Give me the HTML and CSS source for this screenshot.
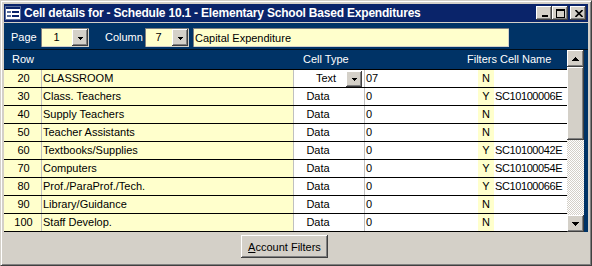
FILE: index.html
```html
<!DOCTYPE html>
<html lang="en">
<head>
<meta charset="UTF-8">
<meta name="viewport" content="width=device-width, initial-scale=1.0">
<title>Cell details</title>
<link rel="stylesheet" href="styles.css">
</head>
<body>
<div class="window">
    <div class="titlebar">
        <svg class="app-icon" width="16" height="14" viewBox="0 0 16 14" shape-rendering="crispEdges">
            <rect x="0" y="0" width="16" height="14" fill="#ffffff"/>
            <rect x="0.5" y="0.5" width="15" height="13" fill="none" stroke="#5a6e9c"/>
            <rect x="1" y="1" width="14" height="2" fill="#0a246a"/>
            <rect x="2" y="5" width="4" height="2" fill="#5a6e9c"/>
            <rect x="7" y="5" width="7" height="2" fill="#0a246a"/>
            <rect x="2" y="9" width="4" height="2" fill="#5a6e9c"/>
            <rect x="7" y="9" width="7" height="2" fill="#0a246a"/>
        </svg>
        <span class="title">Cell details for - Schedule 10.1 - Elementary School Based Expenditures</span>
        <div class="caption-buttons">
            <span class="cap-btn">
                <svg width="8" height="7" viewBox="0 0 8 7" shape-rendering="crispEdges"><rect x="1" y="5" width="6" height="2" fill="#000"/></svg>
            </span>
            <span class="cap-btn">
                <svg width="9" height="9" viewBox="0 0 9 9" shape-rendering="crispEdges"><rect x="0" y="0" width="9" height="2" fill="#000"/><rect x="0" y="0" width="1" height="9" fill="#000"/><rect x="8" y="0" width="1" height="9" fill="#000"/><rect x="0" y="8" width="9" height="1" fill="#000"/></svg>
            </span>
            <span class="cap-btn close-btn">
                <svg width="8" height="7" viewBox="0 0 8 7"><path d="M0.5 0 L7.5 7 M7.5 0 L0.5 7" stroke="#000" stroke-width="1.6"/></svg>
            </span>
        </div>
    </div>

    <div class="client">
        <div class="toolbar">
            <span class="label page-label">Page</span>
            <div class="combo page-combo">
                <span class="combo-value">1</span>
                <span class="drop-btn"><svg width="5" height="3" viewBox="0 0 5 3" shape-rendering="crispEdges"><rect x="0" y="0" width="5" height="1"/><rect x="1" y="1" width="3" height="1"/><rect x="2" y="2" width="1" height="1"/></svg></span>
            </div>
            <span class="label column-label">Column</span>
            <div class="combo column-combo">
                <span class="combo-value">7</span>
                <span class="drop-btn"><svg width="5" height="3" viewBox="0 0 5 3" shape-rendering="crispEdges"><rect x="0" y="0" width="5" height="1"/><rect x="1" y="1" width="3" height="1"/><rect x="2" y="2" width="1" height="1"/></svg></span>
            </div>
            <div class="textbox">Capital Expenditure</div>
        </div>

        <div class="grid-area">
            <div class="grid">
                <div class="grid-head">
                    <span class="h-row">Row</span>
                    <span class="h-desc"></span>
                    <span class="h-type">Cell Type</span>
                    <span class="h-value"></span>
                    <span class="h-rest">Filters Cell Name</span>
                </div>
                <div class="row">
                    <span class="c-num">20</span>
                    <span class="c-desc">CLASSROOM</span>
                    <span class="c-type has-drop">Text<span class="drop-btn"><svg width="5" height="3" viewBox="0 0 5 3" shape-rendering="crispEdges"><rect x="0" y="0" width="5" height="1"/><rect x="1" y="1" width="3" height="1"/><rect x="2" y="2" width="1" height="1"/></svg></span></span>
                    <span class="c-value">07</span>
                    <span class="c-filter">N</span>
                    <span class="c-name"></span>
                </div>
                <div class="row">
                    <span class="c-num">30</span>
                    <span class="c-desc">Class. Teachers</span>
                    <span class="c-type">Data</span>
                    <span class="c-value">0</span>
                    <span class="c-filter">Y</span>
                    <span class="c-name">SC10100006E</span>
                </div>
                <div class="row">
                    <span class="c-num">40</span>
                    <span class="c-desc">Supply Teachers</span>
                    <span class="c-type">Data</span>
                    <span class="c-value">0</span>
                    <span class="c-filter">N</span>
                    <span class="c-name"></span>
                </div>
                <div class="row">
                    <span class="c-num">50</span>
                    <span class="c-desc">Teacher Assistants</span>
                    <span class="c-type">Data</span>
                    <span class="c-value">0</span>
                    <span class="c-filter">N</span>
                    <span class="c-name"></span>
                </div>
                <div class="row">
                    <span class="c-num">60</span>
                    <span class="c-desc">Textbooks/Supplies</span>
                    <span class="c-type">Data</span>
                    <span class="c-value">0</span>
                    <span class="c-filter">Y</span>
                    <span class="c-name">SC10100042E</span>
                </div>
                <div class="row">
                    <span class="c-num">70</span>
                    <span class="c-desc">Computers</span>
                    <span class="c-type">Data</span>
                    <span class="c-value">0</span>
                    <span class="c-filter">Y</span>
                    <span class="c-name">SC10100054E</span>
                </div>
                <div class="row">
                    <span class="c-num">80</span>
                    <span class="c-desc">Prof./ParaProf./Tech.</span>
                    <span class="c-type">Data</span>
                    <span class="c-value">0</span>
                    <span class="c-filter">Y</span>
                    <span class="c-name">SC10100066E</span>
                </div>
                <div class="row">
                    <span class="c-num">90</span>
                    <span class="c-desc">Library/Guidance</span>
                    <span class="c-type">Data</span>
                    <span class="c-value">0</span>
                    <span class="c-filter">N</span>
                    <span class="c-name"></span>
                </div>
                <div class="row">
                    <span class="c-num">100</span>
                    <span class="c-desc">Staff Develop.</span>
                    <span class="c-type">Data</span>
                    <span class="c-value">0</span>
                    <span class="c-filter">N</span>
                    <span class="c-name"></span>
                </div>
            </div>

            <div class="scrollbar">
                <span class="sb-btn"><svg width="7" height="4" viewBox="0 0 7 4" shape-rendering="crispEdges"><rect x="3" y="0" width="1" height="1"/><rect x="2" y="1" width="3" height="1"/><rect x="1" y="2" width="5" height="1"/><rect x="0" y="3" width="7" height="1"/></svg></span>
                <div class="sb-track">
                    <span class="sb-thumb"></span>
                </div>
                <span class="sb-btn"><svg width="7" height="4" viewBox="0 0 7 4" shape-rendering="crispEdges"><rect x="0" y="0" width="7" height="1"/><rect x="1" y="1" width="5" height="1"/><rect x="2" y="2" width="3" height="1"/><rect x="3" y="3" width="1" height="1"/></svg></span>
            </div>
        </div>

        <div class="footer">
            <button class="filters-btn"><u>A</u>ccount Filters</button>
        </div>
    </div>
</div>
</body>
</html>
```

FILE: styles.css
```css
body {
    margin: 0;
    padding: 0;
    font-family: "Liberation Sans", Arial, sans-serif;
    font-size: 11px;
    background-color: #d4d0c8;
}
.window {
    box-sizing: border-box;
    width: 592px;
    height: 266px;
    padding: 3px;
    background-color: #d4d0c8;
    border: 1px solid;
    border-color: #d4d0c8 #404040 #404040 #d4d0c8;
    box-shadow: inset 1px 1px #ffffff, inset -1px -1px #808080;
    display: flex;
    flex-direction: column;
}
.titlebar {
    height: 18px;
    background-color: #0a246a;
    display: flex;
    align-items: center;
    padding-left: 1px;
    margin-bottom: 1px;
}
.app-icon {
    margin-right: 3px;
    flex: none;
}
.title {
    flex: 1;
    color: #fff;
    font-weight: bold;
    font-size: 12px;
    letter-spacing: -0.2px;
    line-height: 18px;
    white-space: nowrap;
}
.caption-buttons {
    display: flex;
    margin-right: 2px;
}
.cap-btn {
    box-sizing: border-box;
    width: 16px;
    height: 14px;
    background-color: #d4d0c8;
    box-shadow: inset -1px -1px #404040, inset 1px 1px #ffffff, inset -2px -2px #808080;
    display: flex;
    align-items: center;
    justify-content: center;
    padding-left: 1px;
}
.close-btn {
    margin-left: 2px;
}
.client {
    flex: 1;
    background-color: #003366;
    display: flex;
    flex-direction: column;
}
.toolbar {
    height: 26px;
    box-sizing: border-box;
    padding: 5px 0 0 7px;
    display: flex;
    align-items: flex-start;
    color: #fff;
}
.label {
    line-height: 19px;
}
.page-label {
    width: 30px;
}
.column-label {
    width: 40px;
    margin-left: 16px;
}
.combo,
.textbox {
    box-sizing: border-box;
    height: 19px;
    background-color: #ffffcc;
    color: #000;
    box-shadow: inset 1px 1px #808080, inset -1px -1px #d4d0c8;
    display: flex;
    align-items: center;
}
.page-combo {
    width: 48px;
}
.column-combo {
    width: 44px;
}
.combo-value {
    flex: 1;
    text-align: center;
    line-height: 17px;
}
.drop-btn {
    box-sizing: border-box;
    width: 16px;
    height: 17px;
    margin-right: 1px;
    background-color: #d4d0c8;
    box-shadow: inset -1px -1px #404040, inset 1px 1px #ffffff, inset -2px -2px #808080;
    display: flex;
    align-items: center;
    justify-content: center;
    padding-top: 1px;
}
.textbox {
    width: 316px;
    margin-left: 4px;
    padding-left: 2px;
}
.grid-area {
    display: flex;
    border-top: 1px solid #000d1a;
    padding-right: 4px;
}
.grid {
    width: 563px;
}
.grid-head {
    display: flex;
    height: 19px;
    line-height: 19px;
    color: #fff;
    border-bottom: 1px solid #000;
    white-space: nowrap;
}
.h-row {
    width: 38px;
    padding-left: 8px;
    box-sizing: border-box;
}
.h-desc {
    width: 252px;
}
.h-type {
    width: 71px;
    padding-left: 9px;
    box-sizing: border-box;
}
.h-value {
    width: 102px;
}
.row {
    display: grid;
    grid-template-columns: 38px 252px 71px 113px 16px 73px;
    height: 17px;
    line-height: 17px;
    border-bottom: 1px solid #000;
    white-space: nowrap;
}
.row span {
    box-sizing: border-box;
    overflow: hidden;
}
.c-num {
    background-color: #ffffcc;
    border-right: 1px solid #c0c0c0;
    text-align: center;
    padding-left: 2px;
}
.c-desc {
    background-color: #ffffcc;
    border-right: 1px solid #c0c0c0;
    padding-left: 1px;
}
.c-type {
    background-color: #fff;
    border-right: 1px solid #c0c0c0;
    text-align: center;
    padding-right: 22px;
}
.c-type.has-drop {
    display: flex;
    align-items: center;
    justify-content: center;
    padding-right: 1px;
}
.c-type.has-drop .drop-btn {
    margin-left: auto;
    height: 16px;
}
.has-drop {
    padding-left: 22px;
}
.c-value {
    background-color: #fff;
    padding-left: 1px;
}
.c-filter {
    background-color: #ffffcc;
    text-align: center;
}
.c-name {
    background-color: #fff;
    padding-left: 1px;
    letter-spacing: -0.4px;
}
.scrollbar {
    width: 17px;
    display: flex;
    flex-direction: column;
}
.sb-btn {
    box-sizing: border-box;
    height: 17px;
    background-color: #d4d0c8;
    box-shadow: inset -1px -1px #404040, inset 1px 1px #ffffff, inset -2px -2px #808080;
    display: flex;
    align-items: center;
    justify-content: center;
}
.sb-track {
    flex: 1;
    background: repeating-conic-gradient(#ffffff 0 25%, #d4d0c8 0 50%) 0 0 / 2px 2px;
}
.sb-thumb {
    display: block;
    height: 73px;
    box-sizing: border-box;
    background-color: #d4d0c8;
    box-shadow: inset -1px -1px #404040, inset 1px 1px #ffffff, inset -2px -2px #808080;
}
.footer {
    flex: 1;
    background-color: #d4d0c8;
    padding: 3px 0 0 237px;
}
.filters-btn {
    width: 87px;
    height: 23px;
    padding: 0;
    font-family: "Liberation Sans", Arial, sans-serif;
    font-size: 11px;
    color: #000;
    background-color: #d4d0c8;
    border: none;
    box-shadow: inset -1px -1px #404040, inset 1px 1px #ffffff, inset -2px -2px #808080;
}
```
